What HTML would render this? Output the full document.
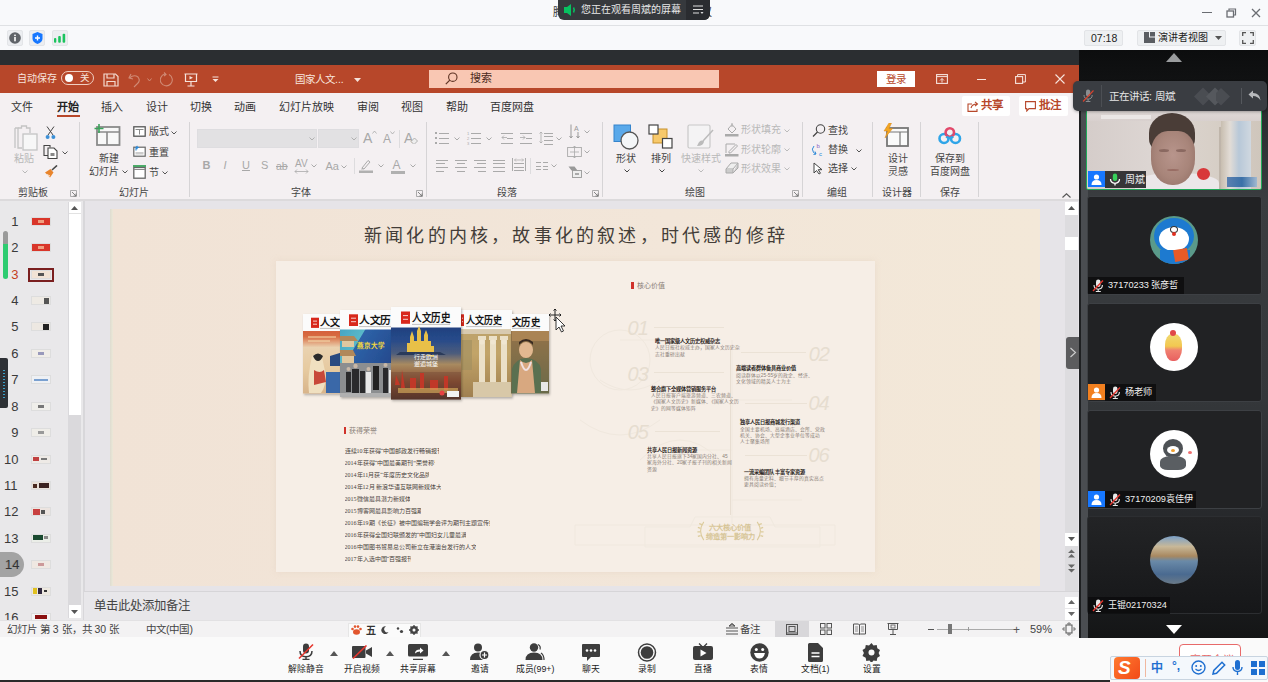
<!DOCTYPE html>
<html lang="zh-CN"><head><meta charset="utf-8">
<style>
*{margin:0;padding:0;box-sizing:border-box}
html,body{width:1268px;height:682px;overflow:hidden;background:#f7f8fa;font-family:"Liberation Sans",sans-serif;color:#333}
.a{position:absolute}
.t{position:absolute;white-space:nowrap;line-height:1}
</style></head><body>
<!-- top title bar -->
<div class="a" style="left:0;top:0;width:1268px;height:26px;background:#f8f9fb;border-bottom:1px solid #dfe1e4"></div>
<div class="a" style="left:0;top:26px;width:1268px;height:24px;background:#f8f9fb"></div>

<!-- title bar content -->
<div class="t" style="left:553px;top:7px;font-size:11px;color:#333">腾</div>
<div class="t" style="left:701px;top:7px;font-size:11px;color:#333">议</div>
<div class="a" style="left:558px;top:-6px;width:152px;height:26px;background:#36393d;border-radius:6px"></div>
<div class="a" style="left:686px;top:0;width:24px;height:20px;background:#2a2c30;border-radius:0 0 6px 0"></div>
<svg class="a" style="left:564px;top:4px" width="14" height="12" viewBox="0 0 14 12"><path d="M0 3h3l4-3v12l-4-3H0z" fill="#07c160"/><path d="M9.5 3.5q1.5 2.5 0 5" stroke="#07c160" stroke-width="1.5" fill="none"/></svg>
<div class="t" style="left:581px;top:5px;font-size:10px;color:#e8e8e8">您正在观看周斌的屏幕</div>
<svg class="a" style="left:693px;top:5px" width="11" height="10" viewBox="0 0 11 10"><path d="M0 1h10M0 4.5h10M0 8h6" stroke="#ddd" stroke-width="1.2"/><path d="M7.5 7h3l-1.5 2z" fill="#ddd"/></svg>
<!-- window controls -->
<div class="a" style="left:1202px;top:12px;width:10px;height:1.3px;background:#6a6d72"></div>
<svg class="a" style="left:1226px;top:8px" width="11" height="10" viewBox="0 0 11 10"><rect x="1" y="3" width="6.5" height="6" fill="none" stroke="#6a6d72" stroke-width="1.3"/><path d="M3 2.5V1h6.5v6h-1.5" fill="none" stroke="#6a6d72" stroke-width="1.2"/></svg>
<svg class="a" style="left:1251px;top:8px" width="10" height="10" viewBox="0 0 10 10"><path d="M1 1l8 8M9 1l-8 8" stroke="#6a6d72" stroke-width="1.3"/></svg>
<!-- second row icons -->
<div class="a" style="left:7px;top:30px;width:16px;height:16px;background:#eceef1;border:1px solid #e3e5e8;border-radius:2px"></div>
<div class="a" style="left:29px;top:30px;width:16px;height:16px;background:#eceef1;border:1px solid #e3e5e8;border-radius:2px"></div>
<div class="a" style="left:52px;top:30px;width:16px;height:16px;background:#eceef1;border:1px solid #e3e5e8;border-radius:2px"></div>
<svg class="a" style="left:9px;top:32px" width="12" height="12" viewBox="0 0 12 12"><circle cx="6" cy="6" r="5.8" fill="#5f6368"/><rect x="5.2" y="5" width="1.6" height="4.3" fill="#fff"/><rect x="5.2" y="2.6" width="1.6" height="1.5" fill="#fff"/></svg>
<svg class="a" style="left:32px;top:32px" width="11" height="12" viewBox="0 0 11 12"><path d="M5.5 0L10.5 2V6.5Q10.5 10 5.5 12Q0.5 10 0.5 6.5V2z" fill="#1677ff"/><path d="M5.5 3.5v5M3 6h5" stroke="#fff" stroke-width="1.4"/></svg>
<svg class="a" style="left:54px;top:33px" width="12" height="10" viewBox="0 0 12 10"><rect x="0" y="5" width="2.3" height="4.7" rx="1" fill="#1bc45e"/><rect x="4.2" y="3" width="2.6" height="6.7" rx="1" fill="#1bc45e"/><rect x="8.6" y="0.8" width="2.6" height="8.9" rx="1" fill="#1bc45e"/></svg>
<!-- time / presenter view / fullscreen -->
<div class="a" style="left:1084px;top:30px;width:39px;height:16px;background:#eef0f2;border:1px solid #e2e4e7;border-radius:2px"></div>
<div class="t" style="left:1091px;top:33px;font-size:10.5px;color:#222">07:18</div>
<div class="a" style="left:1137px;top:30px;width:89px;height:16px;background:#eef0f2;border:1px solid #e2e4e7;border-radius:2px"></div>
<svg class="a" style="left:1144px;top:32px" width="11" height="11" viewBox="0 0 11 11"><path d="M0 0h5v5.5h6V11H0z" fill="#5a5d62"/><rect x="6" y="0" width="5" height="4.5" fill="#5a5d62"/></svg>
<div class="t" style="left:1158px;top:33px;font-size:10px;color:#222">演讲者视图</div>
<svg class="a" style="left:1215px;top:36px" width="7" height="5" viewBox="0 0 7 5"><path d="M0 0h7L3.5 4z" fill="#555"/></svg>
<div class="a" style="left:1239px;top:30px;width:17px;height:16px;background:#eef0f2;border:1px solid #e2e4e7;border-radius:2px"></div>
<svg class="a" style="left:1242px;top:32px" width="12" height="12" viewBox="0 0 12 12"><path d="M0.7 4V0.7H4M8 0.7h3.3V4M11.3 8v3.3H8M4 11.3H0.7V8" fill="none" stroke="#555" stroke-width="1.3"/></svg>
<!-- dark band -->
<div class="a" style="left:0;top:50px;width:1268px;height:15px;background:#2b2e31"></div>
<!-- right panel -->
<div class="a" style="left:1079px;top:50px;width:189px;height:588px;background:#161718"></div>
<!-- PPT window -->
<div id="ppt" class="a" style="left:0;top:65px;width:1079px;height:572px;background:#e6e5e8;overflow:hidden">
  <div class="a" style="left:0;top:0;width:1079px;height:28px;background:#b7472a"></div>
  <div class="a" style="left:0;top:28px;width:1079px;height:107px;background:#f4f0f2"></div>
  <!-- title bar -->
  <div class="t" style="left:17px;top:9px;font-size:10px;color:#f6e3dc">自动保存</div>
  <div class="a" style="left:61px;top:6px;width:33px;height:14px;border:1px solid #f0cfc2;border-radius:7px"></div>
  <div class="a" style="left:65px;top:9px;width:8px;height:8px;background:#fff;border-radius:50%"></div>
  <div class="t" style="left:80px;top:8px;font-size:9.5px;color:#f6e3dc">关</div>
  <svg class="a" style="left:103px;top:8px" width="16" height="14" viewBox="0 0 16 14"><path d="M1 1h11.5l2.5 2.5V13H1z" fill="none" stroke="#f3d9cf" stroke-width="1.2"/><path d="M4 1v4h7V1M4 13V8.5h8V13" fill="none" stroke="#f3d9cf" stroke-width="1.2"/></svg>
  <svg class="a" style="left:128px;top:8px" width="14" height="15" viewBox="0 0 14 15"><path d="M3 1L1 5l4 1" fill="none" stroke="#d08b76" stroke-width="1.1"/><path d="M1.5 5Q6 1 10 4Q13 8 9 11L6 14" fill="none" stroke="#d08b76" stroke-width="1.1"/></svg>
  <svg class="a" style="left:147px;top:13px" width="5" height="4" viewBox="0 0 5 4"><path d="M0.5 0.5L2.5 3 4.5 0.5" fill="none" stroke="#d08b76"/></svg>
  <svg class="a" style="left:160px;top:7px" width="14" height="15" viewBox="0 0 14 15"><path d="M9 2.5A6 6 0 1 1 5 2" fill="none" stroke="#d08b76" stroke-width="1.1"/><path d="M4 0.5l2 2-2 1.5" fill="none" stroke="#d08b76" stroke-width="1.1"/></svg>
  <svg class="a" style="left:184px;top:8px" width="14" height="14" viewBox="0 0 14 14"><path d="M0.5 1h13M1.5 1v7.5h11V1M7 8.5v4.5M3.5 13h7" fill="none" stroke="#f6e3dc" stroke-width="1.2"/><path d="M5.5 3l3.5 1.8-3.5 1.8z" fill="#f6e3dc"/></svg>
  <svg class="a" style="left:212px;top:11px" width="7" height="7" viewBox="0 0 7 7"><path d="M0.5 1h6" stroke="#f6e3dc"/><path d="M0.5 3h6L3.5 6z" fill="#f6e3dc"/></svg>
  <div class="t" style="left:295px;top:8.5px;font-size:10.5px;color:#f8e6df">国家人文...</div>
  <svg class="a" style="left:354px;top:13px" width="7" height="5" viewBox="0 0 7 5"><path d="M0 0h7L3.5 4z" fill="#f6e3dc"/></svg>
  <div class="a" style="left:429px;top:5px;width:290px;height:18px;background:#f9c7b3"></div>
  <svg class="a" style="left:445px;top:7px" width="13" height="13" viewBox="0 0 13 13"><circle cx="7.8" cy="5.2" r="4.2" fill="none" stroke="#5e3324" stroke-width="1.1"/><path d="M4.8 8.2L0.8 12.2" stroke="#5e3324" stroke-width="1.2"/></svg>
  <div class="t" style="left:470px;top:8px;font-size:11px;color:#4a2a20">搜索</div>
  <div class="a" style="left:877px;top:6px;width:38px;height:16px;background:#fff"></div>
  <div class="t" style="left:886px;top:9px;font-size:10.5px;color:#b7472a">登录</div>
  <svg class="a" style="left:936px;top:9px" width="12" height="10" viewBox="0 0 12 10"><rect x="0.6" y="0.6" width="10.8" height="8.8" fill="none" stroke="#f6e3dc" stroke-width="1.1"/><path d="M0.6 2.6h10.8M6 8.5V4.5M4 6.5l2-2 2 2" fill="none" stroke="#f6e3dc" stroke-width="1"/></svg>
  <div class="a" style="left:977px;top:14px;width:9px;height:1px;background:#f6e3dc"></div>
  <svg class="a" style="left:1015px;top:9px" width="11" height="10" viewBox="0 0 11 10"><rect x="0.6" y="2.6" width="7" height="6.8" fill="none" stroke="#f6e3dc" stroke-width="1.1"/><path d="M2.6 2.6V0.6h7.8v7.4H7.6" fill="none" stroke="#f6e3dc" stroke-width="1"/></svg>
  <svg class="a" style="left:1055px;top:9px" width="10" height="10" viewBox="0 0 10 10"><path d="M0.5 0.5l9 9M9.5 0.5l-9 9" stroke="#f6e3dc" stroke-width="1.1"/></svg>
  <!-- tabs -->
  <div class="t" style="left:11px;top:36.8px;font-size:11px;color:#333">文件</div>
  <div class="t" style="left:57px;top:36.8px;font-size:11px;color:#222;font-weight:bold">开始</div>
  <div class="a" style="left:57px;top:50px;width:23px;height:2px;background:#b7472a"></div>
  <div class="t" style="left:101px;top:36.8px;font-size:11px;color:#333">插入</div>
  <div class="t" style="left:146px;top:36.8px;font-size:11px;color:#333">设计</div>
  <div class="t" style="left:190px;top:36.8px;font-size:11px;color:#333">切换</div>
  <div class="t" style="left:234px;top:36.8px;font-size:11px;color:#333">动画</div>
  <div class="t" style="left:279px;top:36.8px;font-size:11px;color:#333">幻灯片放映</div>
  <div class="t" style="left:357px;top:36.8px;font-size:11px;color:#333">审阅</div>
  <div class="t" style="left:401px;top:36.8px;font-size:11px;color:#333">视图</div>
  <div class="t" style="left:446px;top:36.8px;font-size:11px;color:#333">帮助</div>
  <div class="t" style="left:490px;top:36.8px;font-size:11px;color:#333">百度网盘</div>
  <div class="a" style="left:962px;top:31px;width:48px;height:20px;background:#fff;border-radius:2px"></div>
  <svg class="a" style="left:967px;top:36px" width="12" height="11" viewBox="0 0 12 11"><path d="M5 3H1v7.4h9V8" fill="none" stroke="#b7472a" stroke-width="1.1"/><path d="M4 7Q5 3 10 3M8 0.8L10.5 3 8 5.2" fill="none" stroke="#b7472a" stroke-width="1.1"/></svg>
  <div class="t" style="left:981px;top:35px;font-size:11.5px;color:#b7472a;font-weight:bold">共享</div>
  <div class="a" style="left:1019px;top:31px;width:49px;height:20px;background:#fff;border-radius:2px"></div>
  <svg class="a" style="left:1025px;top:36px" width="11" height="11" viewBox="0 0 11 11"><path d="M0.6 0.6h9.8v7H4L1.8 10V7.6H0.6z" fill="none" stroke="#b7472a" stroke-width="1.1"/></svg>
  <div class="t" style="left:1039px;top:35px;font-size:11.5px;color:#b7472a;font-weight:bold">批注</div>

  <div class="a" style="left:0;top:555px;width:1079px;height:17px;background:#f3f2f2"></div>
</div>
<!-- WORK -->
<div class="a" style="left:0;top:200px;width:84px;height:420px;background:#e9e8ea"></div>
<div class="a" style="left:84px;top:200px;width:995px;height:420px;background:#e6e4e8"></div>
<div class="a" style="left:83px;top:200px;width:2px;height:420px;background:#d8d7da"></div>
<div class="a" style="left:0;top:199px;width:1079px;height:2px;background:#dcdadc"></div>
<div class="a" style="left:68px;top:202px;width:13px;height:416px;background:#dad9dc"></div>
<div class="a" style="left:68.5px;top:202px;width:12px;height:213px;background:#fff"></div>
<div class="a" style="left:68.5px;top:213px;width:12px;height:1px;background:#e2e2e2"></div>
<svg class="a" style="left:71px;top:206px" width="7" height="4" viewBox="0 0 7 4"><path d="M0 4h7L3.5 0z" fill="#555"/></svg>
<div class="a" style="left:68.5px;top:605px;width:12px;height:13px;background:#fff"></div>
<svg class="a" style="left:71px;top:610px" width="7" height="4" viewBox="0 0 7 4"><path d="M0 0h7L3.5 4z" fill="#555"/></svg>
<div class="t" style="left:11.3px;top:214.7px;font-size:13px;color:#3a3a3a;">1</div>
<div class="a" style="left:31px;top:216.7px;width:20px;height:9px;background:#d9362a;border:0.5px solid #ddd"></div>
<div class="a" style="left:38px;top:219.7px;width:6px;height:3px;background:#f0a080"></div>
<div class="t" style="left:11.3px;top:241.1px;font-size:13px;color:#3a3a3a;">2</div>
<div class="a" style="left:31px;top:243.1px;width:20px;height:9px;background:#d9362a;border:0.5px solid #ddd"></div>
<div class="a" style="left:38px;top:246.1px;width:6px;height:3px;background:#f0a080"></div>
<div class="t" style="left:11.3px;top:267.6px;font-size:13px;color:#c4401e;">3</div>
<div class="a" style="left:28px;top:267.6px;width:26px;height:14px;border:2px solid #7a1f1f"></div>
<div class="a" style="left:31px;top:269.6px;width:20px;height:9px;background:#f1e3d5;border:0.5px solid #ddd"></div>
<div class="a" style="left:38px;top:272.6px;width:6px;height:3px;background:#555"></div>
<div class="t" style="left:11.3px;top:294.0px;font-size:13px;color:#3a3a3a;">4</div>
<div class="a" style="left:31px;top:296.0px;width:20px;height:9px;background:#eeeae4;border:0.5px solid #ddd"></div>
<div class="a" style="left:44px;top:297.5px;width:5px;height:6px;background:#555"></div>
<div class="t" style="left:11.3px;top:320.4px;font-size:13px;color:#3a3a3a;">5</div>
<div class="a" style="left:31px;top:322.4px;width:20px;height:9px;background:#ede8e2;border:0.5px solid #ddd"></div>
<div class="a" style="left:43px;top:323.9px;width:6px;height:6px;background:#222"></div>
<div class="t" style="left:11.3px;top:346.9px;font-size:13px;color:#3a3a3a;">6</div>
<div class="a" style="left:31px;top:348.9px;width:20px;height:9px;background:#f0ede8;border:0.5px solid #ddd"></div>
<div class="a" style="left:38px;top:351.9px;width:6px;height:3px;background:#99b"></div>
<div class="t" style="left:11.3px;top:373.3px;font-size:13px;color:#3a3a3a;">7</div>
<div class="a" style="left:31px;top:375.3px;width:20px;height:9px;background:#eef0f4;border:0.5px solid #ddd"></div>
<div class="a" style="left:34px;top:378.8px;width:14px;height:2px;background:#7aa0d0"></div>
<div class="t" style="left:11.3px;top:399.7px;font-size:13px;color:#3a3a3a;">8</div>
<div class="a" style="left:31px;top:401.7px;width:20px;height:9px;background:#efeeea;border:0.5px solid #ddd"></div>
<div class="a" style="left:38px;top:404.7px;width:6px;height:3px;background:#777"></div>
<div class="t" style="left:11.3px;top:426.1px;font-size:13px;color:#3a3a3a;">9</div>
<div class="a" style="left:31px;top:428.1px;width:20px;height:9px;background:#efede8;border:0.5px solid #ddd"></div>
<div class="a" style="left:38px;top:431.1px;width:6px;height:3px;background:#999"></div>
<div class="t" style="left:4.1px;top:452.6px;font-size:13px;color:#3a3a3a;">10</div>
<div class="a" style="left:31px;top:454.6px;width:20px;height:9px;background:#eeeae6;border:0.5px solid #ddd"></div>
<div class="a" style="left:33px;top:457.1px;width:6px;height:4px;background:#c04040"></div>
<div class="a" style="left:41px;top:458.1px;width:6px;height:2px;background:#777"></div>
<div class="t" style="left:4.1px;top:479.0px;font-size:13px;color:#3a3a3a;">11</div>
<div class="a" style="left:31px;top:481.0px;width:20px;height:9px;background:#e8e0d8;border:0.5px solid #ddd"></div>
<div class="a" style="left:33px;top:483.5px;width:4px;height:4px;background:#4a2a20"></div>
<div class="a" style="left:39px;top:482.5px;width:10px;height:5px;background:#3a2220"></div>
<div class="t" style="left:4.1px;top:505.4px;font-size:13px;color:#3a3a3a;">12</div>
<div class="a" style="left:31px;top:507.4px;width:20px;height:9px;background:#ece4e0;border:0.5px solid #ddd"></div>
<div class="a" style="left:33px;top:508.9px;width:7px;height:6px;background:#c84040"></div>
<div class="a" style="left:41px;top:509.9px;width:4px;height:4px;background:#555"></div>
<div class="t" style="left:4.1px;top:531.9px;font-size:13px;color:#3a3a3a;">13</div>
<div class="a" style="left:31px;top:533.9px;width:20px;height:9px;background:#ebeee8;border:0.5px solid #ddd"></div>
<div class="a" style="left:33px;top:535.4px;width:10px;height:5px;background:#1a4a30"></div>
<div class="a" style="left:44px;top:536.4px;width:4px;height:3px;background:#888"></div>
<div class="t" style="left:4.1px;top:558.3px;font-size:13px;color:#3a3a3a;">14</div>
<div class="a" style="left:31px;top:560.3px;width:20px;height:9px;background:#efe8e2;border:0.5px solid #ddd"></div>
<div class="a" style="left:38px;top:563.3px;width:6px;height:3px;background:#c99"></div>
<div class="t" style="left:4.1px;top:584.7px;font-size:13px;color:#3a3a3a;">15</div>
<div class="a" style="left:31px;top:586.7px;width:20px;height:9px;background:#ede8e0;border:0.5px solid #ddd"></div>
<div class="a" style="left:33px;top:588.2px;width:4px;height:6px;background:#e0c020"></div>
<div class="a" style="left:38px;top:588.2px;width:4px;height:6px;background:#332a40"></div>
<div class="a" style="left:44px;top:590.2px;width:3px;height:2px;background:#333"></div>
<div class="t" style="left:4.1px;top:611.1px;font-size:13px;color:#3a3a3a;">16</div>
<div class="a" style="left:31px;top:613.1px;width:20px;height:9px;background:#f4f4f4;border:0.5px solid #ddd"></div>
<div class="a" style="left:35px;top:614.6px;width:12px;height:4px;background:#8a1010"></div>
<div class="a" style="left:3px;top:231px;width:5px;height:48px;border-radius:3px;background:linear-gradient(#9a9a9a 0,#9a9a9a 26%,#2ecc71 27%,#2ecc71 100%)"></div>
<div class="a" style="left:0;top:358px;width:8px;height:50px;background:#2e3136;border-radius:0 2px 2px 0"></div>
<div class="a" style="left:3px;top:370px;width:2px;height:30px;background:repeating-linear-gradient(#3aa0c8 0 1px,transparent 1px 3px)"></div>
<div class="a" style="left:-12px;top:552px;width:36px;height:25px;border-radius:13px;background:#9b9b9b;opacity:.9"></div>
<div class="t" style="left:5px;top:558.0px;font-size:13px;color:#333;">14</div>
<div class="a" style="left:1065px;top:202px;width:13px;height:390px;background:#dddcdf"></div>
<div class="a" style="left:1065px;top:202px;width:13px;height:13px;background:#fff"></div>
<svg class="a" style="left:1068px;top:206px" width="7" height="4" viewBox="0 0 7 4"><path d="M0 4h7L3.5 0z" fill="#555"/></svg>
<div class="a" style="left:1065px;top:237px;width:13px;height:13px;background:#fff"></div>
<div class="a" style="left:1065px;top:533px;width:13px;height:13px;background:#fff"></div>
<svg class="a" style="left:1068px;top:537px" width="7" height="4" viewBox="0 0 7 4"><path d="M0 0h7L3.5 4z" fill="#555"/></svg>
<svg class="a" style="left:1067px;top:549px" width="9" height="9" viewBox="0 0 9 9"><path d="M1 4h7L4.5 0.5zM1 8.5h7L4.5 5z" fill="#666"/></svg>
<svg class="a" style="left:1067px;top:564px" width="9" height="9" viewBox="0 0 9 9"><path d="M1 0.5h7L4.5 4zM1 5h7L4.5 8.5z" fill="#666"/></svg>
<div class="a" style="left:84px;top:591px;width:995px;height:1px;background:#d6d5d8"></div>
<div class="a" style="left:84px;top:592px;width:995px;height:28px;background:#e8e7ea"></div>
<div class="t" style="left:94px;top:599.8px;font-size:12.4px;color:#444;">单击此处添加备注</div>
<div class="a" style="left:1065px;top:597px;width:13px;height:11px;background:#fff"></div>
<svg class="a" style="left:1068px;top:600px" width="7" height="4" viewBox="0 0 7 4"><path d="M0 4h7L3.5 0z" fill="#666"/></svg>
<div class="a" style="left:1065px;top:609px;width:13px;height:11px;background:#fff"></div>
<svg class="a" style="left:1068px;top:612px" width="7" height="4" viewBox="0 0 7 4"><path d="M0 0h7L3.5 4z" fill="#666"/></svg>
<div class="a" style="left:0;top:620px;width:1079px;height:17px;background:#f3f2f3;border-top:1px solid #e2e1e3"></div>
<div class="t" style="left:7px;top:624.2px;font-size:10.5px;color:#444;">幻灯片 第 3 张，共 30 张</div>
<div class="t" style="left:146px;top:624.2px;font-size:10.5px;color:#444;">中文(中国)</div>
<div class="a" style="left:348px;top:623px;width:73px;height:14px;background:#fbfbfb;border:1px solid #e6e6e6;border-bottom:none"></div>
<svg class="a" style="left:351px;top:625px" width="11" height="10" viewBox="0 0 11 10"><ellipse cx="5.5" cy="7" rx="3.5" ry="2.8" fill="#e2562e"/><circle cx="1.5" cy="4" r="1.3" fill="#e2562e"/><circle cx="4" cy="1.6" r="1.3" fill="#e2562e"/><circle cx="7" cy="1.6" r="1.3" fill="#e2562e"/><circle cx="9.5" cy="4" r="1.3" fill="#e2562e"/></svg>
<div class="t" style="left:366px;top:625.5px;font-size:10px;color:#333;font-weight:bold">五</div>
<svg class="a" style="left:381px;top:626px" width="8" height="8" viewBox="0 0 8 8"><path d="M5 0.5A3.8 3.8 0 1 0 7.5 6 3 3 0 0 1 5 0.5z" fill="#444"/></svg>
<svg class="a" style="left:396px;top:626px" width="8" height="8" viewBox="0 0 8 8"><circle cx="2" cy="2.5" r="1.2" fill="#444"/><circle cx="5.5" cy="5.5" r="1.6" fill="#444"/></svg>
<svg class="a" style="left:409px;top:625px" width="10" height="10" viewBox="0 0 10 10"><circle cx="5" cy="5" r="3" fill="none" stroke="#444" stroke-width="2"/><path d="M5 0v10M0 5h10M1.5 1.5l7 7M8.5 1.5l-7 7" stroke="#444" stroke-width="1.3"/><circle cx="5" cy="5" r="1.5" fill="#fbfbfb"/></svg>
<svg class="a" style="left:726px;top:623px" width="12" height="12" viewBox="0 0 12 12"><path d="M6 0.5L3 3h6zM0 5h12M0 8h12M0 11h12" fill="none" stroke="#555" stroke-width="1"/><path d="M3.5 3L6 0.8 8.5 3" fill="none" stroke="#555"/></svg>
<div class="t" style="left:740px;top:624.2px;font-size:10.5px;color:#444;">备注</div>
<div class="a" style="left:775px;top:621px;width:34px;height:16px;background:#d8d7da"></div>
<svg class="a" style="left:786px;top:624px" width="12" height="11" viewBox="0 0 12 11"><rect x="0.5" y="0.5" width="11" height="10" fill="none" stroke="#555"/><rect x="3" y="2.5" width="6" height="5" fill="none" stroke="#555"/><path d="M0.5 9h11" stroke="#555"/></svg>
<svg class="a" style="left:820px;top:623px" width="12" height="12" viewBox="0 0 12 12"><rect x="0.5" y="0.5" width="4.5" height="4.5" fill="none" stroke="#555"/><rect x="7" y="0.5" width="4.5" height="4.5" fill="none" stroke="#555"/><rect x="0.5" y="7" width="4.5" height="4.5" fill="none" stroke="#555"/><rect x="7" y="7" width="4.5" height="4.5" fill="none" stroke="#555"/></svg>
<svg class="a" style="left:853px;top:623px" width="13" height="12" viewBox="0 0 13 12"><path d="M0.5 1h5l1 1 1-1h5v10h-5l-1 0.8-1-0.8h-5z M6.5 2v9.5" fill="none" stroke="#555"/><path d="M2 4h3M2 6h3M2 8h3M8 4h3M8 6h3M8 8h3" stroke="#777" stroke-width="0.8"/></svg>
<svg class="a" style="left:887px;top:623px" width="12" height="12" viewBox="0 0 12 12"><path d="M0.5 0.5h11M1.5 0.5v6h9v-6M6 6.5V11M3 11.5h6" fill="none" stroke="#555"/><rect x="4" y="2" width="4" height="3" fill="none" stroke="#555" stroke-width="0.8"/></svg>
<div class="a" style="left:928px;top:629px;width:6px;height:1px;background:#555"></div>
<div class="a" style="left:937px;top:629px;width:80px;height:1px;background:#aaa"></div>
<div class="a" style="left:948px;top:624px;width:4px;height:10px;background:#777"></div>
<div class="a" style="left:968px;top:627px;width:1px;height:4px;background:#999"></div>
<div class="t" style="left:1013px;top:623.5px;font-size:12px;color:#555;">+</div>
<div class="t" style="left:1030px;top:624.0px;font-size:11px;color:#444;">59%</div>
<svg class="a" style="left:1062px;top:622px" width="14" height="14" viewBox="0 0 14 14"><rect x="4" y="3" width="6" height="8" fill="none" stroke="#555"/><path d="M7 0.5L5.5 2h3zM7 13.5L5.5 12h3zM0.5 7L2 5.5v3zM13.5 7L12 5.5v3z" fill="none" stroke="#555" stroke-width="0.8"/></svg>
<!-- /WORK -->
<!-- CONTENT -->
<div class="a" style="left:110px;top:209px;width:930px;height:377px;background:linear-gradient(90deg,#f1e3d6 0%,#f2e6d9 60%,#f3e8d8 100%)"></div>
<div class="a" style="left:110px;top:209px;width:3px;height:377px;background:linear-gradient(90deg,#dedcd0,#ece8d8)"></div>
<div class="t" style="left:364px;top:227px;font-size:18px;letter-spacing:3.2px;color:#433d38;font-family:'Liberation Serif',serif">新闻化的内核，故事化的叙述，时代感的修辞</div>
<div class="a" style="left:276px;top:261px;width:599px;height:311px;background:#f6eee6;box-shadow:0 0 6px rgba(220,200,180,.35)"></div>
<svg class="a" style="left:560px;top:300px" width="300" height="270" viewBox="0 0 300 270"><g fill="none" stroke="#f0e8de" stroke-width="1"><path d="M172 40V225M150 225h-135v20h260v-20H185"/><path d="M172 100h60M172 150h-80M172 200h70M60 40h100M40 80q30 20 60 0M20 120q40 30 80 0"/><circle cx="60" cy="60" r="30"/><path d="M80 160q40-40 80 0"/></g></svg>
<svg class="a" style="left:300px;top:304px" width="256" height="100" viewBox="300 304 256 100"><defs><filter id="sh" x="-10%" y="-10%" width="130%" height="130%"><feDropShadow dx="1" dy="1.5" stdDeviation="1.2" flood-color="#000" flood-opacity=".28"/></filter><linearGradient id="c1" x1="0" y1="0" x2="0" y2="1"><stop offset="0" stop-color="#c9432c"/><stop offset=".28" stop-color="#d86a40"/><stop offset=".42" stop-color="#ead2b0"/><stop offset=".7" stop-color="#e6caa0"/><stop offset="1" stop-color="#d8b48a"/></linearGradient><linearGradient id="c2" x1="0" y1="0" x2="1" y2="1"><stop offset="0" stop-color="#3c9cc0"/><stop offset=".35" stop-color="#5ab8c8"/><stop offset=".36" stop-color="#2e62a8"/><stop offset="1" stop-color="#203e80"/></linearGradient><linearGradient id="c3" x1="0" y1="0" x2="0" y2="1"><stop offset="0" stop-color="#16306a"/><stop offset=".35" stop-color="#264a8a"/><stop offset=".5" stop-color="#4c5c7c"/><stop offset=".62" stop-color="#a88a60"/><stop offset=".8" stop-color="#8a5034"/><stop offset="1" stop-color="#4a3028"/></linearGradient><linearGradient id="c4" x1="0" y1="0" x2="0" y2="1"><stop offset="0" stop-color="#b8a070"/><stop offset=".5" stop-color="#c2a468"/><stop offset="1" stop-color="#a08050"/></linearGradient><linearGradient id="c5" x1="0" y1="0" x2="0" y2="1"><stop offset="0" stop-color="#a07848"/><stop offset=".4" stop-color="#8a7048"/><stop offset="1" stop-color="#6a6a48"/></linearGradient></defs><g filter="url(#sh)"><rect x="303" y="314" width="40" height="79.5" fill="url(#c1)"/></g><rect x="303" y="314" width="40" height="17" fill="#fbfbfb"/><rect x="311" y="317.7" width="8" height="10.2" fill="#d8281c"/><path d="M313 321.1h4M313 324.2h4" stroke="#fff" stroke-width="0.8"/><text x="320" y="326.2" font-size="10" font-weight="bold" fill="#151515" font-family="Liberation Serif,serif" textLength="20" lengthAdjust="spacingAndGlyphs">人文</text><path d="M320 328.4h20" stroke="#888" stroke-width="0.5"/><path d="M308 337h28M308 341h22" stroke="#f6e0b0" stroke-width="1.2"/><path d="M330 356l13-4v14h-13z" fill="#2a4a80"/><path d="M326 372h17v21h-17z" fill="#3a68a8"/><path d="M312 356q6-4 10 1l3 14q2 14-4 22h-12q-2-16 3-37z" fill="#f0e0c0"/><path d="M314 370q6 4 10 0l2 12-12 3z" fill="#c84838"/><path d="M313 356q5-5 10 0q-2 5-5 5q-3 0-5-5z" fill="#2a2a2a"/><g filter="url(#sh)"><rect x="340" y="310" width="52" height="87" fill="url(#c2)"/></g><rect x="340" y="310" width="52" height="19.5" fill="#fbfbfb"/><rect x="349" y="314.3" width="9" height="11.7" fill="#d8281c"/><path d="M351 318.2h5M351 321.7h5" stroke="#fff" stroke-width="0.8"/><text x="359" y="324.0" font-size="10" font-weight="bold" fill="#151515" font-family="Liberation Serif,serif" textLength="32" lengthAdjust="spacingAndGlyphs">人文历</text><path d="M359 326.6h32" stroke="#888" stroke-width="0.5"/><path d="M340 336h14l4 5h-18zM340 350h13l3 6h-16z" fill="#b0885a"/><path d="M342 341h12v6h-12zM342 356h12v7h-12z" fill="#e0c8a0"/><text x="357" y="348" font-size="6.5" font-weight="bold" fill="#f4d840">燕京大学</text><rect x="340" y="363" width="52" height="34" fill="#8c8e90"/><path d="M346 372h5v20h-5zM352 369h7v25h-7zM360 371h5v23h-5zM383 368h5v25h-5z" fill="#2a2a2c"/><path d="M366 372h5v22h-5zM389 370h3v23h-3z" fill="#e8e8e8"/><path d="M373 366h6v24h-6z" fill="#222"/><circle cx="348.5" cy="369" r="2" fill="#c8b8a8"/><circle cx="355.5" cy="366" r="2.2" fill="#c8b8a8"/><circle cx="368.5" cy="369" r="2" fill="#c8b8a8"/><circle cx="385.5" cy="365" r="2" fill="#c8b8a8"/><rect x="340" y="393" width="52" height="4" fill="#b0b0b0"/><g filter="url(#sh)"><rect x="461" y="310" width="51" height="87" fill="url(#c4)"/></g><rect x="461" y="310" width="51" height="19.5" fill="#fbfbfb"/><rect x="461" y="314.3" width="3" height="11.7" fill="#d8281c"/><path d="M463 318.2h-1M463 321.7h-1" stroke="#fff" stroke-width="0.8"/><text x="466" y="324.0" font-size="10" font-weight="bold" fill="#151515" font-family="Liberation Serif,serif" textLength="36" lengthAdjust="spacingAndGlyphs">人文历史</text><path d="M466 326.6h36" stroke="#888" stroke-width="0.5"/><path d="M462 340h10v30h-10z" fill="#a09060" opacity=".6"/><path d="M461 330h51v4h-51z" fill="#d8cab0"/><path d="M478 336h8v4h-1v42h-6v-42h-1z" fill="#ebe0c8"/><circle cx="482" cy="342" r="2.6" fill="#f0e6d2"/><path d="M489 336h8v4h-1v42h-6v-42h-1z" fill="#ebe0c8"/><circle cx="493" cy="342" r="2.6" fill="#f0e6d2"/><path d="M500 336h8v4h-1v42h-6v-42h-1z" fill="#ebe0c8"/><circle cx="504" cy="342" r="2.6" fill="#f0e6d2"/><rect x="473" y="382" width="39" height="15" fill="#d8c8a8"/><g filter="url(#sh)"><rect x="511" y="314" width="38" height="79.5" fill="url(#c5)"/></g><rect x="511" y="314" width="38" height="17" fill="#fbfbfb"/><text x="512" y="326.2" font-size="10" font-weight="bold" fill="#151515" font-family="Liberation Serif,serif" textLength="28" lengthAdjust="spacingAndGlyphs">文历史</text><path d="M512 328.4h28" stroke="#888" stroke-width="0.5"/><path d="M512 331h37v10h-37z" fill="#b08858" opacity=".8"/><ellipse cx="526" cy="350" rx="7" ry="8" fill="#e2b890"/><path d="M519 345q7-8 14 0v-3q-7-6-14 0z" fill="#3a2a20"/><path d="M512 393v-24q3-10 14-11q13 1 15 11v24z" fill="#5a7050"/><path d="M520 360q6 6 12 0l3 33h-18z" fill="#d8a880"/><path d="M521 362q5 16 10 0" fill="none" stroke="#f0e0e0" stroke-width="2"/><rect x="541" y="382" width="7" height="9" fill="#e8e8e8"/><g filter="url(#sh)"><rect x="391" y="307" width="70" height="92.5" fill="url(#c3)"/></g><rect x="391" y="307" width="70" height="20.5" fill="#fbfbfb"/><rect x="401" y="311.5" width="9" height="12.3" fill="#d8281c"/><path d="M403 315.6h5M403 319.3h5" stroke="#fff" stroke-width="0.8"/><text x="412" y="321.8" font-size="11" font-weight="bold" fill="#151515" font-family="Liberation Serif,serif" textLength="38" lengthAdjust="spacingAndGlyphs">人文历史</text><path d="M412 324.4h38" stroke="#888" stroke-width="0.5"/><path d="M407 352v-9h3v-6l2-6 2 6v4h3v-10l2-5 2 5v10h3v-6l2-5 2 5v6h3v5h3v11z" fill="#e8c048"/><path d="M400 352h40l6 3h-50z" fill="#2a3a5a"/><text x="414" y="359" font-size="6" fill="#fff">行走欧洲</text><text x="414" y="366" font-size="6" fill="#fff">邂逅城堡</text><path d="M391 372h70v27.5h-70z" fill="#6a4030" opacity=".35"/><path d="M396 375l4 10h-5zM402 370l3 18h-4zM410 378h6v12h-6zM420 373h4v16h-4zM430 380h8v10h-8zM444 376h4v14h-4z" fill="#c03828"/><path d="M398 388h60v5h-60z" fill="#e0b860" opacity=".6"/><rect x="447" y="391" width="12" height="6" fill="#f2f2f2"/><circle cx="442" cy="393" r="2.5" fill="#e84040"/></svg>
<svg class="a" style="left:549px;top:309px;z-index:5" width="18" height="24" viewBox="0 0 18 24"><path d="M6 0v12M0 6h12M6 0L4.5 1.5M6 0l1.5 1.5M0 6l1.5-1.5M0 6l1.5 1.5M12 6l-1.5-1.5M12 6l-1.5 1.5M6 12l-1.5-1.5M6 12l1.5-1.5" stroke="#222" stroke-width="1"/><path d="M7 8v13l3-3 2.5 5 2-1-2.5-5H16z" fill="#fff" stroke="#222" stroke-width="0.9"/></svg>
<div class="a" style="left:344px;top:427px;width:2px;height:7px;background:#d0322a"></div>
<div class="t" style="left:349px;top:427.2px;font-size:7px;color:#8a8078;">获得荣誉</div>
<div class="t" style="left:344.5px;top:447.6px;font-size:6px;color:#4a4440;font-family:'Liberation Serif',serif;width:94px;overflow:hidden">连续10年获得“中国邮政发行畅销报刊”</div>
<div class="t" style="left:344.5px;top:459.7px;font-size:6px;color:#4a4440;font-family:'Liberation Serif',serif;width:90px;overflow:hidden">2014年获得“中国最美期刊”荣誉称号</div>
<div class="t" style="left:344.5px;top:471.7px;font-size:6px;color:#4a4440;font-family:'Liberation Serif',serif;width:84px;overflow:hidden">2014年11月获“年度历史文化品牌”</div>
<div class="t" style="left:344.5px;top:483.8px;font-size:6px;color:#4a4440;font-family:'Liberation Serif',serif;width:96px;overflow:hidden">2014年12月 新浪华语互联网新媒体大奖</div>
<div class="t" style="left:344.5px;top:495.8px;font-size:6px;color:#4a4440;font-family:'Liberation Serif',serif;width:65px;overflow:hidden">2015微信最具潜力新媒体奖</div>
<div class="t" style="left:344.5px;top:507.9px;font-size:6px;color:#4a4440;font-family:'Liberation Serif',serif;width:76px;overflow:hidden">2015博客网最具影响力百强期刊</div>
<div class="t" style="left:344.5px;top:519.9px;font-size:6px;color:#4a4440;font-family:'Liberation Serif',serif;width:145px;overflow:hidden">2016年19期《长征》被中国编辑学会评为期刊主题宣传好文章</div>
<div class="t" style="left:344.5px;top:532.0px;font-size:6px;color:#4a4440;font-family:'Liberation Serif',serif;width:121px;overflow:hidden">2016年获得全国妇联颁发的“中国妇女儿童最满意奖”</div>
<div class="t" style="left:344.5px;top:544.0px;font-size:6px;color:#4a4440;font-family:'Liberation Serif',serif;width:131px;overflow:hidden">2016中国图书贸易总公司新立在港澳台发行的人文期刊</div>
<div class="t" style="left:344.5px;top:556.1px;font-size:6px;color:#4a4440;font-family:'Liberation Serif',serif;width:66px;overflow:hidden">2017年入选中国“百强报刊”</div>
<div class="a" style="left:631px;top:282px;width:2.5px;height:7px;background:#d0322a"></div>
<div class="t" style="left:636.5px;top:282.0px;font-size:7px;color:#8a8078;">核心价值</div>
<div class="a" style="left:730px;top:345px;width:1px;height:170px;background:#e8ded2"></div>
<div class="a" style="left:654px;top:327px;width:70px;height:1px;background:#ebe2d6"></div>
<div class="a" style="left:654px;top:372px;width:70px;height:1px;background:#ebe2d6"></div>
<div class="a" style="left:741px;top:352px;width:65px;height:1px;background:#ebe2d6"></div>
<div class="a" style="left:745px;top:403px;width:62px;height:1px;background:#ebe2d6"></div>
<div class="a" style="left:655px;top:431px;width:65px;height:1px;background:#ebe2d6"></div>
<div class="a" style="left:745px;top:455px;width:62px;height:1px;background:#ebe2d6"></div>
<div class="t" style="left:627.6px;top:318.0px;font-size:20px;font-style:italic;color:#e6ddd0;font-family:'Liberation Sans',sans-serif;letter-spacing:-1px">01</div>
<div class="t" style="left:808.7px;top:343.5px;font-size:20px;font-style:italic;color:#e6ddd0;font-family:'Liberation Sans',sans-serif;letter-spacing:-1px">02</div>
<div class="t" style="left:627.6px;top:363.5px;font-size:20px;font-style:italic;color:#e6ddd0;font-family:'Liberation Sans',sans-serif;letter-spacing:-1px">03</div>
<div class="t" style="left:808.5px;top:393.0px;font-size:20px;font-style:italic;color:#e6ddd0;font-family:'Liberation Sans',sans-serif;letter-spacing:-1px">04</div>
<div class="t" style="left:627.7px;top:421.5px;font-size:20px;font-style:italic;color:#e6ddd0;font-family:'Liberation Sans',sans-serif;letter-spacing:-1px">05</div>
<div class="t" style="left:808.4px;top:445.0px;font-size:20px;font-style:italic;color:#e6ddd0;font-family:'Liberation Sans',sans-serif;letter-spacing:-1px">06</div>
<div class="t" style="left:655.2px;top:338.8px;font-size:5.2px;font-weight:bold;color:#2a2522">唯一国家级人文历史权威杂志</div>
<div class="t" style="left:655.2px;top:346.3px;font-size:4.8px;color:#8a8078">人民日报社权威主办，国家人文历史杂</div>
<div class="t" style="left:655.2px;top:352.5px;font-size:4.8px;color:#8a8078">志社重磅出献</div>
<div class="t" style="left:735.8px;top:366.4px;font-size:5.2px;font-weight:bold;color:#2a2522">高端读者群体备具商业价值</div>
<div class="t" style="left:735.8px;top:373.9px;font-size:4.8px;color:#8a8078">阅读群体以25-55岁的政企、经济、</div>
<div class="t" style="left:735.8px;top:380.1px;font-size:4.8px;color:#8a8078">文化领域的精英人士为主</div>
<div class="t" style="left:651.2px;top:386.7px;font-size:5.2px;font-weight:bold;color:#2a2522">整合旗下全媒体营销服务平台</div>
<div class="t" style="left:651.2px;top:394.2px;font-size:4.8px;color:#8a8078">人民日报客户端旅游频道、三农频道、</div>
<div class="t" style="left:651.2px;top:400.4px;font-size:4.8px;color:#8a8078">《国家人文历史》新媒体、《国家人文历</div>
<div class="t" style="left:651.2px;top:406.6px;font-size:4.8px;color:#8a8078">史》的网等媒体矩阵</div>
<div class="t" style="left:739.8px;top:420.2px;font-size:5.2px;font-weight:bold;color:#2a2522">独享人民日报商城发行渠道</div>
<div class="t" style="left:739.8px;top:427.7px;font-size:4.8px;color:#8a8078">全国主要机场、高端酒店、会所、党政</div>
<div class="t" style="left:739.8px;top:433.9px;font-size:4.8px;color:#8a8078">机关、协会、大型企事业单位等成功</div>
<div class="t" style="left:739.8px;top:440.1px;font-size:4.8px;color:#8a8078">人士聚集场所</div>
<div class="t" style="left:647px;top:447.7px;font-size:5.2px;font-weight:bold;color:#2a2522">共享人民日报新闻资源</div>
<div class="t" style="left:647px;top:455.2px;font-size:4.8px;color:#8a8078">共享人民日报旗下34家国内分社、45</div>
<div class="t" style="left:647px;top:461.4px;font-size:4.8px;color:#8a8078">家海外分社、20家子报子刊的相关新闻</div>
<div class="t" style="left:647px;top:467.6px;font-size:4.8px;color:#8a8078">资源</div>
<div class="t" style="left:743.8px;top:469.6px;font-size:5.2px;font-weight:bold;color:#2a2522">一流采编团队  丰富专家资源</div>
<div class="t" style="left:743.8px;top:477.1px;font-size:4.8px;color:#8a8078">拥有海量史料、细节丰厚的真实高点</div>
<div class="t" style="left:743.8px;top:483.3px;font-size:4.8px;color:#8a8078">更具阅读价值；</div>
<svg class="a" style="left:640px;top:505px" width="185" height="45" viewBox="0 0 185 45"><g fill="none" stroke="#f0e9df" stroke-width="1"><path d="M55 12h75l5 10h45v20H5V22h45z"/></g></svg>
<svg class="a" style="left:697px;top:521px" width="9" height="20" viewBox="0 0 9 22"><path d="M7 1Q0 11 7 21" fill="none" stroke="#dccb9c" stroke-width="1.2"/><path d="M5 4l-3-1M3.5 8l-3-1M3 12l-3 0M3.5 16l-3 1" stroke="#dccb9c" stroke-width="1.5"/></svg>
<svg class="a" style="left:755px;top:521px" width="9" height="20" viewBox="0 0 9 22"><path d="M2 1Q9 11 2 21" fill="none" stroke="#dccb9c" stroke-width="1.2"/><path d="M4 4l3-1M5.5 8l3-1M6 12l3 0M5.5 16l3 1" stroke="#dccb9c" stroke-width="1.5"/></svg>
<div class="t" style="left:708.7px;top:524.4px;font-size:7.3px;color:#d6c597;font-weight:bold">六大核心价值</div>
<div class="t" style="left:705.5px;top:532.7px;font-size:7.2px;color:#d6c597;font-weight:bold">缔造第一影响力</div>
<!-- /CONTENT -->
<!-- RIBBON -->
<svg class="a" style="left:14px;top:125px" width="24" height="26" viewBox="0 0 24 26"><path d="M4 3h3.5V1h5v2H16v5" fill="none" stroke="#c4c4c4" stroke-width="1.3"/><path d="M1 3h3v20H8M1 3v20" fill="none" stroke="#c4c4c4" stroke-width="1.3"/><rect x="9" y="9" width="14" height="16" fill="#f7f7f7" stroke="#c4c4c4" stroke-width="1.3"/></svg>
<div class="t" style="left:14px;top:154.3px;font-size:10px;color:#b8b8b8;">粘贴</div>
<svg class="a" style="left:22px;top:169.5px" width="6" height="4" viewBox="0 0 6 4"><path d="M0.5 0.5L3 3 5.5 0.5" fill="none" stroke="#b8b8b8" stroke-width="1"/></svg>
<svg class="a" style="left:45px;top:126px" width="11" height="14" viewBox="0 0 11 14"><path d="M2 0.5L8 9M9 0.5L3 9" stroke="#444" stroke-width="1"/><circle cx="2.6" cy="11" r="2" fill="#3c8fd6"/><circle cx="8.4" cy="11" r="2" fill="#3c8fd6"/></svg>
<svg class="a" style="left:43px;top:145px" width="15" height="14" viewBox="0 0 15 14"><path d="M7 2.5V0.5H1v10h4" fill="none" stroke="#444" stroke-width="1.1"/><path d="M5 3h6l3 3v7.5H5z" fill="#fff" stroke="#444" stroke-width="1.1"/><rect x="7.5" y="8" width="4" height="3" fill="#888"/></svg>
<svg class="a" style="left:62px;top:150.8px" width="6" height="4" viewBox="0 0 6 4"><path d="M0.5 0.5L3 3 5.5 0.5" fill="none" stroke="#555" stroke-width="1"/></svg>
<svg class="a" style="left:44px;top:165px" width="14" height="13" viewBox="0 0 14 13"><path d="M8 5l5-4.5" stroke="#444" stroke-width="1.6"/><path d="M1 7.5l5.5-3.5 3 3.5L6 12.5z" fill="#e8842c"/><path d="M3 9.5l3 1.5" stroke="#fff" stroke-width="0.8"/></svg>
<div class="t" style="left:18px;top:188.0px;font-size:10px;color:#444;">剪贴板</div>
<svg class="a" style="left:70px;top:190px" width="7" height="7" viewBox="0 0 7 7"><path d="M0.5 6.5V0.5h6v6z" fill="none" stroke="#999" stroke-width="0.8"/><path d="M2 2l4 4M6 3.5V6H3.5" fill="none" stroke="#777" stroke-width="0.9"/></svg>
<div class="a" style="left:79px;top:122px;width:1px;height:75px;background:#d6d4d6"></div>
<svg class="a" style="left:94px;top:123px" width="27" height="24" viewBox="0 0 27 24"><rect x="3" y="4" width="22.5" height="18" fill="#f8f8f8" stroke="#8a8a8a" stroke-width="1.8"/><path d="M3 9h22.5M13 9v13" stroke="#8a8a8a" stroke-width="1.6"/><path d="M0.5 5.5h9M5 1v9" stroke="#3aa35a" stroke-width="1.6"/></svg>
<div class="t" style="left:98.5px;top:154.3px;font-size:10px;color:#444;">新建</div>
<div class="t" style="left:88.5px;top:167.2px;font-size:10px;color:#444;">幻灯片</div>
<svg class="a" style="left:121.5px;top:170.2px" width="6" height="4" viewBox="0 0 6 4"><path d="M0.5 0.5L3 3 5.5 0.5" fill="none" stroke="#555" stroke-width="1"/></svg>
<div class="t" style="left:119px;top:188.0px;font-size:10px;color:#444;">幻灯片</div>
<svg class="a" style="left:133px;top:126px" width="13" height="11" viewBox="0 0 13 11"><rect x="0.8" y="0.8" width="11.4" height="9.4" fill="#fff" stroke="#555" stroke-width="1.3"/><path d="M2.5 3.5h8M6.5 3.5v5" stroke="#888" stroke-width="1"/></svg>
<div class="t" style="left:148.5px;top:127.2px;font-size:10px;color:#444;">版式</div>
<svg class="a" style="left:171.3px;top:130.5px" width="6" height="4" viewBox="0 0 6 4"><path d="M0.5 0.5L3 3 5.5 0.5" fill="none" stroke="#555" stroke-width="1"/></svg>
<svg class="a" style="left:133px;top:145px" width="13" height="12" viewBox="0 0 13 12"><rect x="0.8" y="2.2" width="11.4" height="9" fill="#fff" stroke="#666" stroke-width="1.2"/><path d="M3 5.5V2.5h3M4.5 1l-1.5 1.5 1.5 1.5" fill="none" stroke="#2e8ad8" stroke-width="1.1"/><rect x="2.5" y="7" width="8" height="2.5" fill="#ccc"/></svg>
<div class="t" style="left:148.5px;top:147.5px;font-size:10px;color:#444;">重置</div>
<svg class="a" style="left:133px;top:165px" width="13" height="14" viewBox="0 0 13 14"><rect x="0.8" y="2.5" width="11.4" height="10.7" fill="#fff" stroke="#666" stroke-width="1.3"/><path d="M0 1h13" stroke="#3aa35a" stroke-width="1.8"/><path d="M1 4.5h11" stroke="#888" stroke-width="1"/></svg>
<div class="t" style="left:148.5px;top:167.8px;font-size:10px;color:#444;">节</div>
<svg class="a" style="left:161.5px;top:171px" width="6" height="4" viewBox="0 0 6 4"><path d="M0.5 0.5L3 3 5.5 0.5" fill="none" stroke="#555" stroke-width="1"/></svg>
<div class="a" style="left:189px;top:122px;width:1px;height:75px;background:#d6d4d6"></div>
<div class="a" style="left:197px;top:129px;width:120px;height:19px;background:#e2e1e3;border:1px solid #dedde0"></div>
<svg class="a" style="left:308.5px;top:136.5px" width="6" height="4" viewBox="0 0 6 4"><path d="M0.5 0.5L3 3 5.5 0.5" fill="none" stroke="#b0b0b0" stroke-width="1"/></svg>
<div class="a" style="left:318px;top:129px;width:41px;height:19px;background:#e2e1e3;border:1px solid #dedde0"></div>
<svg class="a" style="left:350.5px;top:136.5px" width="6" height="4" viewBox="0 0 6 4"><path d="M0.5 0.5L3 3 5.5 0.5" fill="none" stroke="#b0b0b0" stroke-width="1"/></svg>
<div class="t" style="left:363px;top:130.5px;font-size:14px;color:#a8a8a8;font-weight:normal">A</div>
<svg class="a" style="left:372px;top:130px" width="5" height="4" viewBox="0 0 5 4"><path d="M0.5 3.5L2.5 1 4.5 3.5" fill="none" stroke="#aaa" stroke-width="0.8"/></svg>
<div class="t" style="left:383px;top:132.5px;font-size:12px;color:#a8a8a8;">A</div>
<svg class="a" style="left:390px;top:131px" width="5" height="4" viewBox="0 0 5 4"><path d="M0.5 0.5L2.5 3 4.5 0.5" fill="none" stroke="#aaa" stroke-width="0.8"/></svg>
<div class="a" style="left:399px;top:130px;width:1px;height:18px;background:#dddcde"></div>
<div class="t" style="left:404px;top:130.5px;font-size:14px;color:#a8a8a8;">A</div>
<svg class="a" style="left:410px;top:137px" width="8" height="7" viewBox="0 0 8 7"><path d="M1 4.5L4.5 1 7.5 4 4 7.5z" fill="#eee" stroke="#aaa" stroke-width="0.9"/></svg>
<div class="t" style="left:202.5px;top:159.5px;font-size:11px;color:#a8a8a8;font-weight:bold">B</div>
<div class="t" style="left:223.5px;top:159.5px;font-size:11px;color:#a8a8a8;font-style:italic">I</div>
<div class="t" style="left:242px;top:159.5px;font-size:11px;color:#a8a8a8;text-decoration:underline">U</div>
<div class="t" style="left:261px;top:159.5px;font-size:11px;color:#a8a8a8;">S</div>
<div class="t" style="left:276px;top:160.8px;font-size:10.5px;color:#a8a8a8;text-decoration:line-through">ab</div>
<div class="t" style="left:295px;top:158.5px;font-size:10px;color:#a8a8a8;">AV</div>
<svg class="a" style="left:294px;top:169px" width="15" height="5" viewBox="0 0 15 5"><path d="M1 2.5h13M3 0.5l-2 2 2 2M12 0.5l2 2-2 2" fill="none" stroke="#aaa" stroke-width="0.8"/></svg>
<svg class="a" style="left:311px;top:164px" width="6" height="4" viewBox="0 0 6 4"><path d="M0.5 0.5L3 3 5.5 0.5" fill="none" stroke="#aaa" stroke-width="1"/></svg>
<div class="t" style="left:325.5px;top:160.8px;font-size:11px;color:#a8a8a8;">Aa</div>
<svg class="a" style="left:341px;top:164.5px" width="6" height="4" viewBox="0 0 6 4"><path d="M0.5 0.5L3 3 5.5 0.5" fill="none" stroke="#aaa" stroke-width="1"/></svg>
<div class="a" style="left:354px;top:158px;width:1px;height:16px;background:#dddcde"></div>
<svg class="a" style="left:359px;top:159px" width="14" height="14" viewBox="0 0 14 14"><path d="M3 9l6-7.5 2 1.5-6 7z" fill="none" stroke="#aaa" stroke-width="1"/><path d="M2 10.5l1-1.5 2 1.3z" fill="#aaa"/><rect x="0" y="11.5" width="14" height="2.5" fill="#b0b0b0"/></svg>
<svg class="a" style="left:378px;top:164px" width="6" height="4" viewBox="0 0 6 4"><path d="M0.5 0.5L3 3 5.5 0.5" fill="none" stroke="#aaa" stroke-width="1"/></svg>
<div class="t" style="left:392.5px;top:158.5px;font-size:12px;color:#a8a8a8;">A</div>
<div class="a" style="left:391px;top:171px;width:14px;height:2.5px;background:#b0b0b0"></div>
<svg class="a" style="left:410px;top:164px" width="6" height="4" viewBox="0 0 6 4"><path d="M0.5 0.5L3 3 5.5 0.5" fill="none" stroke="#aaa" stroke-width="1"/></svg>
<div class="t" style="left:290.5px;top:187.5px;font-size:10px;color:#444;">字体</div>
<svg class="a" style="left:416px;top:190px" width="7" height="7" viewBox="0 0 7 7"><path d="M0.5 6.5V0.5h6v6z" fill="none" stroke="#999" stroke-width="0.8"/><path d="M2 2l4 4M6 3.5V6H3.5" fill="none" stroke="#777" stroke-width="0.9"/></svg>
<div class="a" style="left:426px;top:122px;width:1px;height:75px;background:#d6d4d6"></div>
<div class="a" style="left:435px;top:132px;width:2px;height:2px;background:#aaa"></div>
<div class="a" style="left:435px;top:137px;width:2px;height:2px;background:#aaa"></div>
<div class="a" style="left:435px;top:142px;width:2px;height:2px;background:#aaa"></div>
<div class="a" style="left:439px;top:132.5px;width:10px;height:1.2px;background:#aaa"></div>
<div class="a" style="left:439px;top:137.5px;width:10px;height:1.2px;background:#aaa"></div>
<div class="a" style="left:439px;top:142.5px;width:10px;height:1.2px;background:#aaa"></div>
<svg class="a" style="left:454px;top:137px" width="6" height="4" viewBox="0 0 6 4"><path d="M0.5 0.5L3 3 5.5 0.5" fill="none" stroke="#aaa" stroke-width="1"/></svg>
<div class="t" style="left:467px;top:131.5px;font-size:4px;color:#aaa;">1</div>
<div class="t" style="left:467px;top:136.5px;font-size:4px;color:#aaa;">2</div>
<div class="t" style="left:467px;top:141.5px;font-size:4px;color:#aaa;">3</div>
<div class="a" style="left:471px;top:132.5px;width:10px;height:1.2px;background:#aaa"></div>
<div class="a" style="left:471px;top:137.5px;width:10px;height:1.2px;background:#aaa"></div>
<div class="a" style="left:471px;top:142.5px;width:10px;height:1.2px;background:#aaa"></div>
<svg class="a" style="left:486px;top:137px" width="6" height="4" viewBox="0 0 6 4"><path d="M0.5 0.5L3 3 5.5 0.5" fill="none" stroke="#aaa" stroke-width="1"/></svg>
<div class="a" style="left:501px;top:132.5px;width:12px;height:1.2px;background:#aaa"></div>
<div class="a" style="left:507px;top:137.5px;width:6px;height:1.2px;background:#aaa"></div>
<div class="a" style="left:501px;top:142.5px;width:12px;height:1.2px;background:#aaa"></div>
<svg class="a" style="left:501px;top:135px" width="6" height="5" viewBox="0 0 6 5"><path d="M6 2.5H1M3 0.5l-2 2 2 2" fill="none" stroke="#aaa" stroke-width="0.8"/></svg>
<div class="a" style="left:520px;top:132.5px;width:12px;height:1.2px;background:#aaa"></div>
<div class="a" style="left:526px;top:137.5px;width:6px;height:1.2px;background:#aaa"></div>
<div class="a" style="left:520px;top:142.5px;width:12px;height:1.2px;background:#aaa"></div>
<svg class="a" style="left:520px;top:135px" width="6" height="5" viewBox="0 0 6 5"><path d="M0 2.5h5M3 0.5l2 2-2 2" fill="none" stroke="#aaa" stroke-width="0.8"/></svg>
<svg class="a" style="left:539px;top:131px" width="4" height="13" viewBox="0 0 4 13"><path d="M2 1v11M0.5 2.5L2 1l1.5 1.5M0.5 10.5L2 12l1.5-1.5" fill="none" stroke="#aaa" stroke-width="0.8"/></svg>
<div class="a" style="left:544px;top:132.5px;width:9px;height:1.2px;background:#aaa"></div>
<div class="a" style="left:544px;top:136.2px;width:9px;height:1.2px;background:#aaa"></div>
<div class="a" style="left:544px;top:139.9px;width:9px;height:1.2px;background:#aaa"></div>
<div class="a" style="left:544px;top:143.6px;width:9px;height:1.2px;background:#aaa"></div>
<svg class="a" style="left:556px;top:137px" width="6" height="4" viewBox="0 0 6 4"><path d="M0.5 0.5L3 3 5.5 0.5" fill="none" stroke="#aaa" stroke-width="1"/></svg>
<svg class="a" style="left:569px;top:124px" width="13" height="15" viewBox="0 0 13 15"><path d="M2 0.5v13M0.5 12l1.5 2 1.5-2M9 8v6M7.5 12l1.5 2 1.5-2" fill="none" stroke="#999" stroke-width="1"/><text x="5" y="7" font-size="7" fill="#999" font-family="Liberation Sans">A</text></svg>
<svg class="a" style="left:584px;top:130px" width="6" height="4" viewBox="0 0 6 4"><path d="M0.5 0.5L3 3 5.5 0.5" fill="none" stroke="#aaa" stroke-width="1"/></svg>
<svg class="a" style="left:567px;top:146px" width="15" height="12" viewBox="0 0 15 12"><rect x="0.6" y="1.5" width="13.8" height="9" fill="none" stroke="#aaa" stroke-width="0.9"/><path d="M7.5 0v12M6 1.5L7.5 0 9 1.5M6 10.5L7.5 12 9 10.5M3 6h9" fill="none" stroke="#aaa" stroke-width="0.8"/></svg>
<svg class="a" style="left:584px;top:150px" width="6" height="4" viewBox="0 0 6 4"><path d="M0.5 0.5L3 3 5.5 0.5" fill="none" stroke="#aaa" stroke-width="1"/></svg>
<svg class="a" style="left:568px;top:166px" width="14" height="12" viewBox="0 0 14 12"><path d="M0.5 0.5h6l3 4H3.5z" fill="#999"/><rect x="4.5" y="4.5" width="9" height="7" fill="#eee" stroke="#999" stroke-width="0.9"/><rect x="7" y="7" width="4" height="2" fill="#aaa"/></svg>
<svg class="a" style="left:584px;top:171px" width="6" height="4" viewBox="0 0 6 4"><path d="M0.5 0.5L3 3 5.5 0.5" fill="none" stroke="#aaa" stroke-width="1"/></svg>
<div class="a" style="left:436px;top:159.5px;width:12px;height:1.2px;background:#aaa"></div>
<div class="a" style="left:436px;top:163.2px;width:9px;height:1.2px;background:#aaa"></div>
<div class="a" style="left:436px;top:166.9px;width:12px;height:1.2px;background:#aaa"></div>
<div class="a" style="left:436px;top:170.6px;width:8px;height:1.2px;background:#aaa"></div>
<div class="a" style="left:455px;top:159.5px;width:12px;height:1.2px;background:#aaa"></div>
<div class="a" style="left:457px;top:163.2px;width:8px;height:1.2px;background:#aaa"></div>
<div class="a" style="left:455px;top:166.9px;width:12px;height:1.2px;background:#aaa"></div>
<div class="a" style="left:457px;top:170.6px;width:8px;height:1.2px;background:#aaa"></div>
<div class="a" style="left:474px;top:159.5px;width:12px;height:1.2px;background:#aaa"></div>
<div class="a" style="left:477px;top:163.2px;width:9px;height:1.2px;background:#aaa"></div>
<div class="a" style="left:474px;top:166.9px;width:12px;height:1.2px;background:#aaa"></div>
<div class="a" style="left:478px;top:170.6px;width:8px;height:1.2px;background:#aaa"></div>
<div class="a" style="left:493px;top:159.5px;width:12px;height:1.2px;background:#aaa"></div>
<div class="a" style="left:493px;top:163.2px;width:12px;height:1.2px;background:#aaa"></div>
<div class="a" style="left:493px;top:166.9px;width:12px;height:1.2px;background:#aaa"></div>
<div class="a" style="left:493px;top:170.6px;width:12px;height:1.2px;background:#aaa"></div>
<div class="a" style="left:512px;top:158px;width:1px;height:13px;background:#aaa"></div><div class="a" style="left:525px;top:158px;width:1px;height:13px;background:#aaa"></div>
<div class="a" style="left:514px;top:163.0px;width:10px;height:1.2px;background:#aaa"></div>
<div class="a" style="left:514px;top:166.5px;width:10px;height:1.2px;background:#aaa"></div>
<div class="a" style="left:514px;top:170.0px;width:10px;height:1.2px;background:#aaa"></div>
<svg class="a" style="left:514px;top:158px" width="10" height="4" viewBox="0 0 10 4"><path d="M0.5 2h9M2 0.5L0.5 2 2 3.5M8 0.5L9.5 2 8 3.5" fill="none" stroke="#aaa" stroke-width="0.7"/></svg>
<div class="a" style="left:530px;top:158px;width:1px;height:16px;background:#dddcde"></div>
<div class="a" style="left:536px;top:162.0px;width:5px;height:1.2px;background:#aaa"></div>
<div class="a" style="left:536px;top:165.5px;width:5px;height:1.2px;background:#aaa"></div>
<div class="a" style="left:536px;top:169.0px;width:5px;height:1.2px;background:#aaa"></div>
<div class="a" style="left:543px;top:162.0px;width:5px;height:1.2px;background:#aaa"></div>
<div class="a" style="left:543px;top:165.5px;width:5px;height:1.2px;background:#aaa"></div>
<div class="a" style="left:543px;top:169.0px;width:5px;height:1.2px;background:#aaa"></div>
<svg class="a" style="left:551px;top:164px" width="6" height="4" viewBox="0 0 6 4"><path d="M0.5 0.5L3 3 5.5 0.5" fill="none" stroke="#aaa" stroke-width="1"/></svg>
<div class="t" style="left:497px;top:188.0px;font-size:10px;color:#444;">段落</div>
<svg class="a" style="left:592px;top:190px" width="7" height="7" viewBox="0 0 7 7"><path d="M0.5 6.5V0.5h6v6z" fill="none" stroke="#999" stroke-width="0.8"/><path d="M2 2l4 4M6 3.5V6H3.5" fill="none" stroke="#777" stroke-width="0.9"/></svg>
<div class="a" style="left:602px;top:122px;width:1px;height:75px;background:#d6d4d6"></div>
<svg class="a" style="left:613px;top:124px" width="26" height="27" viewBox="0 0 26 27"><rect x="1" y="1" width="16.5" height="16.5" fill="#5aa9ea" stroke="#3584cc" stroke-width="1"/><circle cx="16.5" cy="16.5" r="8.5" fill="#f4f6f8" stroke="#555" stroke-width="1.3"/></svg>
<div class="t" style="left:616px;top:153.6px;font-size:10px;color:#444;">形状</div>
<svg class="a" style="left:623.5px;top:169.3px" width="6" height="4" viewBox="0 0 6 4"><path d="M0.5 0.5L3 3 5.5 0.5" fill="none" stroke="#444" stroke-width="1"/></svg>
<svg class="a" style="left:648px;top:124px" width="26" height="26" viewBox="0 0 26 26"><rect x="5" y="5" width="14" height="14" fill="#f7c96b" stroke="#c8912c" stroke-width="1"/><rect x="1" y="1" width="9" height="9" fill="#fff" stroke="#444" stroke-width="1.2"/><rect x="14.5" y="14.5" width="9.5" height="9.5" fill="#fff" stroke="#444" stroke-width="1.2"/></svg>
<div class="t" style="left:650.5px;top:153.6px;font-size:10px;color:#444;">排列</div>
<svg class="a" style="left:658.5px;top:169.3px" width="6" height="4" viewBox="0 0 6 4"><path d="M0.5 0.5L3 3 5.5 0.5" fill="none" stroke="#444" stroke-width="1"/></svg>
<svg class="a" style="left:687px;top:124px" width="28" height="26" viewBox="0 0 28 26"><rect x="1" y="1" width="22" height="23" rx="1.5" fill="#f4f3f4" stroke="#c8c8c8" stroke-width="1.2"/><path d="M26 6L16 17" stroke="#bbb" stroke-width="1.5"/><path d="M11 20q2-5 6-3q0 5-7 5z" fill="#bbb"/></svg>
<div class="t" style="left:680.5px;top:153.6px;font-size:10px;color:#b8b8b8;">快速样式</div>
<svg class="a" style="left:698px;top:169.3px" width="6" height="4" viewBox="0 0 6 4"><path d="M0.5 0.5L3 3 5.5 0.5" fill="none" stroke="#bbb" stroke-width="1"/></svg>
<svg class="a" style="left:725px;top:123px" width="14" height="14" viewBox="0 0 14 14"><path d="M3 6l4-4.5 4 4.5-4 4z" fill="none" stroke="#aaa" stroke-width="1"/><path d="M7 0v4" stroke="#aaa"/><rect x="0" y="11" width="13.5" height="2.5" fill="#aaa"/></svg>
<div class="t" style="left:741px;top:125.4px;font-size:10px;color:#b8b8b8;">形状填充</div>
<svg class="a" style="left:784px;top:128.5px" width="6" height="4" viewBox="0 0 6 4"><path d="M0.5 0.5L3 3 5.5 0.5" fill="none" stroke="#bbb" stroke-width="1"/></svg>
<svg class="a" style="left:725px;top:143px" width="14" height="14" viewBox="0 0 14 14"><path d="M1 10V1h9" fill="none" stroke="#aaa" stroke-width="1"/><path d="M4 8.5L11 1.5l1.5 1.5L5.5 10H4z" fill="none" stroke="#aaa" stroke-width="1"/><rect x="0" y="11" width="13.5" height="2.5" fill="#aaa"/></svg>
<div class="t" style="left:741px;top:144.5px;font-size:10px;color:#b8b8b8;">形状轮廓</div>
<svg class="a" style="left:784px;top:147.5px" width="6" height="4" viewBox="0 0 6 4"><path d="M0.5 0.5L3 3 5.5 0.5" fill="none" stroke="#bbb" stroke-width="1"/></svg>
<svg class="a" style="left:725px;top:162px" width="14" height="12" viewBox="0 0 14 12"><path d="M1 7l5-6h7L8 7z" fill="#eee" stroke="#aaa" stroke-width="1"/><path d="M1 7v4h7V7M8 11l5-5V1" fill="#ccc" stroke="#aaa" stroke-width="1"/></svg>
<div class="t" style="left:741px;top:163.5px;font-size:10px;color:#b8b8b8;">形状效果</div>
<svg class="a" style="left:784px;top:166.5px" width="6" height="4" viewBox="0 0 6 4"><path d="M0.5 0.5L3 3 5.5 0.5" fill="none" stroke="#bbb" stroke-width="1"/></svg>
<div class="t" style="left:684.5px;top:188.4px;font-size:10px;color:#444;">绘图</div>
<svg class="a" style="left:792px;top:190px" width="7" height="7" viewBox="0 0 7 7"><path d="M0.5 6.5V0.5h6v6z" fill="none" stroke="#999" stroke-width="0.8"/><path d="M2 2l4 4M6 3.5V6H3.5" fill="none" stroke="#777" stroke-width="0.9"/></svg>
<div class="a" style="left:802px;top:122px;width:1px;height:75px;background:#d6d4d6"></div>
<svg class="a" style="left:812px;top:124px" width="14" height="13" viewBox="0 0 14 13"><circle cx="8.5" cy="5" r="4.2" fill="none" stroke="#444" stroke-width="1.1"/><path d="M5.5 8L1 12.5" stroke="#444" stroke-width="1.3"/></svg>
<div class="t" style="left:827.5px;top:125.6px;font-size:10px;color:#444;">查找</div>
<svg class="a" style="left:811px;top:143px" width="13" height="13" viewBox="0 0 13 13"><text x="5.5" y="5" font-size="6" fill="#8e5fc2" font-family="Liberation Sans">b</text><text x="8" y="12.5" font-size="6" fill="#2e8ad8" font-family="Liberation Sans">c</text><path d="M3 3Q0 6 2.5 9.5L5 11M4 8.5L5 11 2.5 11.5" fill="none" stroke="#2e8ad8" stroke-width="1"/></svg>
<div class="t" style="left:827.5px;top:145.3px;font-size:10px;color:#444;">替换</div>
<svg class="a" style="left:855.5px;top:148.5px" width="6" height="4" viewBox="0 0 6 4"><path d="M0.5 0.5L3 3 5.5 0.5" fill="none" stroke="#555" stroke-width="1"/></svg>
<svg class="a" style="left:813px;top:162px" width="10" height="13" viewBox="0 0 10 13"><path d="M1 1v10l2.5-2.5L6 12l1.5-0.8-2.3-3.5H9z" fill="#fff" stroke="#444" stroke-width="1"/></svg>
<div class="t" style="left:827.5px;top:163.5px;font-size:10px;color:#444;">选择</div>
<svg class="a" style="left:850.5px;top:166.5px" width="6" height="4" viewBox="0 0 6 4"><path d="M0.5 0.5L3 3 5.5 0.5" fill="none" stroke="#555" stroke-width="1"/></svg>
<div class="t" style="left:827px;top:188.0px;font-size:10px;color:#444;">编组</div>
<div class="a" style="left:872px;top:122px;width:1px;height:75px;background:#d6d4d6"></div>
<svg class="a" style="left:883px;top:123px" width="27" height="24" viewBox="0 0 27 24"><rect x="4" y="5" width="21" height="18" fill="#fafafa" stroke="#777" stroke-width="1.8"/><path d="M4 9h21M17 9v14" stroke="#777" stroke-width="1.2"/><path d="M6 0L1 8h3.5L2 15 9.5 5.5H6L8.5 0z" fill="#f2a623" stroke="#d9861a" stroke-width="0.5"/></svg>
<div class="t" style="left:887.5px;top:154.3px;font-size:10px;color:#444;">设计</div>
<div class="t" style="left:887.5px;top:166.6px;font-size:10px;color:#444;">灵感</div>
<div class="t" style="left:881.5px;top:188.0px;font-size:10px;color:#444;">设计器</div>
<div class="a" style="left:920px;top:122px;width:1px;height:75px;background:#d6d4d6"></div>
<svg class="a" style="left:938px;top:127px" width="24" height="18" viewBox="0 0 24 18"><circle cx="6" cy="11.5" r="4.5" fill="none" stroke="#2fa5e8" stroke-width="2.6"/><circle cx="17.5" cy="11.5" r="4.5" fill="none" stroke="#2fa5e8" stroke-width="2.6"/><circle cx="11.8" cy="5.5" r="4.2" fill="none" stroke="#e2486a" stroke-width="2.6"/><path d="M8.5 9.5A4.2 4.2 0 0 0 15 9.5" fill="none" stroke="#2fa5e8" stroke-width="2.6"/></svg>
<div class="t" style="left:935px;top:154.3px;font-size:10px;color:#444;">保存到</div>
<div class="t" style="left:930px;top:166.6px;font-size:10px;color:#444;">百度网盘</div>
<div class="t" style="left:939.5px;top:188.0px;font-size:10px;color:#444;">保存</div>
<div class="a" style="left:978px;top:122px;width:1px;height:75px;background:#d6d4d6"></div>
<svg class="a" style="left:1062px;top:193px" width="9" height="5" viewBox="0 0 9 5"><path d="M0.5 4.5L4.5 0.8 8.5 4.5" fill="none" stroke="#555" stroke-width="1.1"/></svg>
<!-- /RIBBON -->
<!-- bottom toolbar -->
<div class="a" style="left:0;top:637px;width:1268px;height:45px;background:#fafafa"></div>
<!-- PANEL -->
<div class="a" style="left:1079px;top:50px;width:189px;height:588px;background:linear-gradient(180deg,#0c0d0e 0px,#131415 45px,#2a2c2f 62px,#3a3d40 150px,#34373a 350px,#25272a 480px,#141516 588px)"></div>
<div class="a" style="left:1079px;top:110px;width:9px;height:528px;background:linear-gradient(90deg,#1e2022 0,#1e2022 2px,#4a4d51 2px,#4a4d51 100%)"></div>
<div class="a" style="left:1066px;top:336.5px;width:13px;height:32.5px;background:#5c5c5e;border-radius:3px 0 0 3px"></div>
<svg class="a" style="left:1069px;top:347px" width="8" height="11" viewBox="0 0 8 11"><path d="M1.5 1l5 4.5-5 4.5" fill="none" stroke="#cfcfcf" stroke-width="1.1"/></svg>
<svg class="a" style="left:1166px;top:53px" width="16" height="9" viewBox="0 0 16 9"><path d="M0 9h16L8 0z" fill="#9a9c9e"/></svg>
<div class="a" style="left:1086px;top:106px;width:176px;height:84px;border:1.5px solid #1faa59;border-radius:2px;overflow:hidden;background:linear-gradient(90deg,#d5cdca 0%,#ddd6d3 40%,#d8d0c8 70%,#cfc6bc 100%)"><div class="a" style="left:40px;top:8px;width:30px;height:4px;background:#e8e4e2"></div><div class="a" style="left:134px;top:10px;width:30px;height:75px;background:linear-gradient(90deg,#c8beb0,#e2dcd6 30%,#b8c8d8 60%,#d0d8e0)"></div><div class="a" style="left:140px;top:70px;width:30px;height:10px;background:linear-gradient(90deg,#5a80b0,#3a70a8,#a0b8d0)"></div><div class="a" style="left:0;top:0;width:176px;height:14px;background:linear-gradient(180deg,#e2dcda,#d8d0ce)"></div><div class="a" style="left:14px;top:8px;width:50px;height:4px;background:#ebe7e6"></div><div class="a" style="left:132px;top:20px;width:2px;height:64px;background:#bfb5aa"></div><div class="a" style="left:48px;top:66px;width:84px;height:22px;border-radius:45% 45% 0 0;background:#ebe7e9"></div><div class="a" style="left:62px;top:6px;width:46px;height:40px;border-radius:50% 50% 35% 35%;background:#4a3d37"></div><div class="a" style="left:64px;top:24px;width:44px;height:54px;border-radius:38% 38% 48% 48%;background:radial-gradient(ellipse at 50% 45%,#b8958c 0%,#a8857a 55%,#8e6c62 100%)"></div><div class="a" style="left:72px;top:42px;width:10px;height:3px;border-radius:50%;background:#7a5a52;opacity:.7"></div><div class="a" style="left:89px;top:42px;width:10px;height:3px;border-radius:50%;background:#7a5a52;opacity:.7"></div><div class="a" style="left:80px;top:62px;width:12px;height:2px;border-radius:50%;background:#8a5a52;opacity:.6"></div><div class="a" style="left:110px;top:61px;width:13px;height:12px;border-radius:50%;background:#d8383a"></div></div>
<div class="a" style="left:1088px;top:171px;width:17px;height:16px;background:#1677ff"></div><svg class="a" style="left:1091px;top:174px" width="11" height="11" viewBox="0 0 11 11"><circle cx="5.5" cy="3" r="2.6" fill="#fff"/><path d="M0.5 11q0-5 5-5t5 5z" fill="#fff"/></svg>
<div class="a" style="left:1105px;top:171px;width:41px;height:16.5px;background:rgba(40,40,42,.92)"></div>
<svg class="a" style="left:1109px;top:173px" width="12" height="13" viewBox="0 0 12 13"><rect x="3.8" y="0.5" width="4.4" height="7.5" rx="2.2" fill="#37d05a"/><path d="M1.5 6q0 4 4.5 4.3q4.5-.3 4.5-4.3M6 10.3V12.5" fill="none" stroke="#fff" stroke-width="1.3"/></svg>
<div class="t" style="left:1125px;top:174.5px;font-size:10px;color:#f0f0f0;">周斌</div>
<div class="a" style="left:1073px;top:81px;width:194px;height:29.5px;background:#3a3d42;border-radius:5px;box-shadow:0 1px 3px rgba(0,0,0,.3)"></div>
<svg class="a" style="left:1082px;top:89px" width="12" height="13" viewBox="0 0 12 13"><rect x="4" y="0.5" width="4.2" height="7" rx="2" fill="#8a8d90"/><path d="M2 6q0 4 4.1 4.1q4.1-.1 4.1-4.1M6.1 10.1V12.5M3.8 12.5h4.6" fill="none" stroke="#8a8d90" stroke-width="1"/><path d="M1 12.5L11.5 1.5" stroke="#d9432e" stroke-width="1.1"/></svg>
<div class="a" style="left:1101px;top:85px;width:1px;height:22px;background:#4c4f54"></div>
<div class="t" style="left:1109px;top:91.0px;font-size:10.5px;color:#e6e6e6;">正在讲话: 周斌</div>
<svg class="a" style="left:1194px;top:87px" width="36" height="19" viewBox="0 0 36 19"><path d="M0 9.5L9 0.5l9 9-9 9z" fill="#4a4d52"/><path d="M12 9.5L21 0.5l9 9-9 9z" fill="#55585d"/><path d="M22 6l5-5 9 8.5-9 9-5-5z" fill="#4a4d52"/></svg>
<div class="a" style="left:1241px;top:88px;width:1px;height:16px;background:#55585d"></div>
<svg class="a" style="left:1248px;top:90px" width="13" height="11" viewBox="0 0 13 11"><path d="M5 0.5L0.5 4.5 5 8.5V6q5 0 7.5 4.5Q12 3 5 3z" fill="#b8babd"/></svg>
<div class="a" style="left:1087px;top:196px;width:175px;height:99px;background:#212224;border:1px solid #3d4044;border-radius:3px"></div>
<div class="a" style="left:1150px;top:216px;width:48px;height:48px;border-radius:50%;overflow:hidden;background:#5a9a8a"><div class="a" style="left:4px;top:2px;width:40px;height:36px;border-radius:50%;background:#1d7ad0"></div><div class="a" style="left:9px;top:11px;width:30px;height:24px;border-radius:50%;background:#fff"></div><div class="a" style="left:20px;top:10px;width:8px;height:7px;border-radius:50%;background:#fff;border:1px solid #333"></div><div class="a" style="left:22px;top:16px;width:4px;height:4px;border-radius:50%;background:#e03020"></div><div class="a" style="left:10px;top:34px;width:30px;height:14px;background:#1d7ad0"></div><div class="a" style="left:24px;top:33px;width:14px;height:12px;background:#e85a28;transform:rotate(-10deg)"></div></div>
<div class="a" style="left:1088px;top:277px;width:96px;height:16.5px;background:rgba(12,12,13,.85)"></div>
<svg class="a" style="left:1092px;top:279px" width="12" height="13" viewBox="0 0 12 13"><rect x="4" y="0.5" width="4.5" height="7.5" rx="2.2" fill="#e8e8e8"/><path d="M2 6q0 4 4.2 4.2q4.2-.2 4.2-4.2M6.2 10.2V12.5M3.8 12.5h5" fill="none" stroke="#e8e8e8" stroke-width="1.1"/><path d="M1 12L11 1.5" stroke="#e5362e" stroke-width="1.3"/></svg>
<div class="t" style="left:1108px;top:280.9px;font-size:9.2px;color:#eee;">37170233 张彦哲</div>
<div class="a" style="left:1087px;top:303px;width:175px;height:99px;background:#212224;border:1px solid #3d4044;border-radius:3px"></div>
<div class="a" style="left:1150px;top:323px;width:48px;height:48px;border-radius:50%;background:#fff"></div>
<div class="a" style="left:1165px;top:334px;width:17px;height:27px;border-radius:40% 40% 45% 45%;background:linear-gradient(180deg,#f0d870 0%,#f2c850 45%,#f08070 60%,#e86060 100%)"></div>
<div class="a" style="left:1170px;top:330px;width:6px;height:6px;border-radius:50%;background:#e04848"></div>
<div class="a" style="left:1088px;top:384px;width:17px;height:16px;background:#f2801f"></div><svg class="a" style="left:1091px;top:387px" width="11" height="11" viewBox="0 0 11 11"><circle cx="5.5" cy="3" r="2.6" fill="#fff"/><path d="M0.5 11q0-5 5-5t5 5z" fill="#fff"/></svg>
<div class="a" style="left:1105px;top:384px;width:51px;height:16.5px;background:rgba(12,12,13,.85)"></div>
<svg class="a" style="left:1109px;top:386px" width="12" height="13" viewBox="0 0 12 13"><rect x="4" y="0.5" width="4.5" height="7.5" rx="2.2" fill="#e8e8e8"/><path d="M2 6q0 4 4.2 4.2q4.2-.2 4.2-4.2M6.2 10.2V12.5M3.8 12.5h5" fill="none" stroke="#e8e8e8" stroke-width="1.1"/><path d="M1 12L11 1.5" stroke="#e5362e" stroke-width="1.3"/></svg>
<div class="t" style="left:1125px;top:387.9px;font-size:9.2px;color:#eee;">杨老师</div>
<div class="a" style="left:1087px;top:410px;width:175px;height:99px;background:#212224;border:1px solid #3d4044;border-radius:3px"></div>
<div class="a" style="left:1150px;top:430px;width:48px;height:48px;border-radius:50%;background:#fff"></div>
<div class="a" style="left:1163px;top:439px;width:20px;height:19px;border-radius:50%;background:#4e5256"></div>
<div class="a" style="left:1167px;top:446px;width:12px;height:8px;border-radius:50%;background:#fff"></div>
<div class="a" style="left:1171px;top:449px;width:4px;height:3px;border-radius:50%;background:#f0a030"></div>
<div class="a" style="left:1160px;top:456px;width:26px;height:14px;border-radius:40% 40% 30% 30%;background:#5a5e62"></div>
<div class="a" style="left:1188px;top:451px;width:4px;height:3px;border-radius:50%;background:#f07070"></div>
<div class="a" style="left:1088px;top:491px;width:17px;height:16px;background:#1677ff"></div><svg class="a" style="left:1091px;top:494px" width="11" height="11" viewBox="0 0 11 11"><circle cx="5.5" cy="3" r="2.6" fill="#fff"/><path d="M0.5 11q0-5 5-5t5 5z" fill="#fff"/></svg>
<div class="a" style="left:1105px;top:491px;width:91px;height:16.5px;background:rgba(12,12,13,.85)"></div>
<svg class="a" style="left:1109px;top:493px" width="12" height="13" viewBox="0 0 12 13"><rect x="4" y="0.5" width="4.5" height="7.5" rx="2.2" fill="#e8e8e8"/><path d="M2 6q0 4 4.2 4.2q4.2-.2 4.2-4.2M6.2 10.2V12.5M3.8 12.5h5" fill="none" stroke="#e8e8e8" stroke-width="1.1"/><path d="M1 12L11 1.5" stroke="#e5362e" stroke-width="1.3"/></svg>
<div class="t" style="left:1125px;top:494.9px;font-size:9.2px;color:#eee;">37170209袁佳伊</div>
<div class="a" style="left:1087px;top:516px;width:175px;height:98px;background:linear-gradient(180deg,#232426,#161719);border:1px solid #2c2e31;border-radius:3px"></div>
<div class="a" style="left:1150px;top:536px;width:48px;height:48px;border-radius:50%;overflow:hidden;background:linear-gradient(180deg,#7aa0c8 0%,#c8b898 22%,#a88860 42%,#6a8aa8 52%,#4a6a90 80%,#6a7a88 100%)"></div>
<div class="a" style="left:1088px;top:597px;width:82px;height:16.5px;background:rgba(12,12,13,.85)"></div>
<svg class="a" style="left:1092px;top:599px" width="12" height="13" viewBox="0 0 12 13"><rect x="4" y="0.5" width="4.5" height="7.5" rx="2.2" fill="#e8e8e8"/><path d="M2 6q0 4 4.2 4.2q4.2-.2 4.2-4.2M6.2 10.2V12.5M3.8 12.5h5" fill="none" stroke="#e8e8e8" stroke-width="1.1"/><path d="M1 12L11 1.5" stroke="#e5362e" stroke-width="1.3"/></svg>
<div class="t" style="left:1108px;top:600.9px;font-size:9.2px;color:#eee;">王锟02170324</div>
<svg class="a" style="left:1166px;top:625px" width="16" height="9" viewBox="0 0 16 9"><path d="M0 0h16L8 9z" fill="#fff"/></svg>
<svg class="a" style="left:298px;top:643px" width="16" height="17" viewBox="0 0 16 17"><rect x="5" y="0.5" width="6" height="10" rx="3" fill="#3d3d3d"/><path d="M2 8q0 5.5 6 5.8q6-.3 6-5.8M8 13.8V16.5M4.5 16.5h7" fill="none" stroke="#3d3d3d" stroke-width="1.5"/><path d="M1 15.5L15 1.5" stroke="#e5362e" stroke-width="1.6"/></svg>
<div class="t" style="left:246px;width:120px;text-align:center;top:665.1px;font-size:8.8px;color:#222">解除静音</div>
<svg class="a" style="left:330px;top:651px" width="8" height="5" viewBox="0 0 8 5"><path d="M0 5h8L4 0z" fill="#555"/></svg>
<svg class="a" style="left:352px;top:645px" width="20" height="14" viewBox="0 0 20 14"><rect x="0" y="1" width="13.5" height="12" rx="1" fill="#3d3d3d"/><path d="M14 5.5L20 2v10l-6-3.5z" fill="#3d3d3d"/><path d="M1 13.5L14.5 0.5" stroke="#e5362e" stroke-width="1.6"/></svg>
<div class="t" style="left:302px;width:120px;text-align:center;top:665.1px;font-size:8.8px;color:#222">开启视频</div>
<svg class="a" style="left:386px;top:651px" width="8" height="5" viewBox="0 0 8 5"><path d="M0 5h8L4 0z" fill="#555"/></svg>
<svg class="a" style="left:408px;top:644px" width="20" height="16" viewBox="0 0 20 16"><rect x="0" y="0" width="20" height="12.5" rx="1.5" fill="#3d3d3d"/><path d="M5 15.5h10" stroke="#3d3d3d" stroke-width="1.5"/><path d="M7 9.5q0-4 5-4V3.5l3.5 3-3.5 3V7.5q-3 0-5 2z" fill="#fff"/></svg>
<div class="t" style="left:358px;width:120px;text-align:center;top:665.1px;font-size:8.8px;color:#222">共享屏幕</div>
<svg class="a" style="left:442px;top:651px" width="8" height="5" viewBox="0 0 8 5"><path d="M0 5h8L4 0z" fill="#555"/></svg>
<svg class="a" style="left:470px;top:643px" width="20" height="17" viewBox="0 0 20 17"><circle cx="8" cy="4.5" r="4" fill="#3d3d3d"/><path d="M0 17q0-7.5 8-7.5q3 0 5 1v6.5z" fill="#3d3d3d"/><circle cx="14.5" cy="12" r="4.5" fill="#3d3d3d" stroke="#fafafa" stroke-width="1.2"/><path d="M14.5 9.5v5M12 12h5" stroke="#fff" stroke-width="1.2"/></svg>
<div class="t" style="left:420px;width:120px;text-align:center;top:665.1px;font-size:8.8px;color:#222">邀请</div>
<svg class="a" style="left:525px;top:643px" width="20" height="17" viewBox="0 0 20 17"><circle cx="9" cy="4.5" r="4.2" fill="#3d3d3d"/><path d="M0.5 17q0-7.5 8.5-7.5t8.5 7.5z" fill="#3d3d3d"/><path d="M13 1.5q3 1.5 2 5M16 10q3 2 3 7" fill="none" stroke="#3d3d3d" stroke-width="1.2"/></svg>
<div class="t" style="left:475px;width:120px;text-align:center;top:665.1px;font-size:8.8px;color:#222">成员(99+)</div>
<svg class="a" style="left:582px;top:644px" width="18" height="17" viewBox="0 0 18 17"><path d="M1 0h16a1 1 0 0 1 1 1v11a1 1 0 0 1-1 1H9l-4 4v-4H1a1 1 0 0 1-1-1V1a1 1 0 0 1 1-1z" fill="#3d3d3d"/><circle cx="5" cy="6.5" r="1.3" fill="#fff"/><circle cx="9" cy="6.5" r="1.3" fill="#fff"/><circle cx="13" cy="6.5" r="1.3" fill="#fff"/></svg>
<div class="t" style="left:531px;width:120px;text-align:center;top:665.1px;font-size:8.8px;color:#222">聊天</div>
<svg class="a" style="left:637px;top:643px" width="20" height="19" viewBox="0 0 20 19"><circle cx="10" cy="9.5" r="8.5" fill="none" stroke="#3d3d3d" stroke-width="1.5"/><circle cx="10" cy="9.5" r="6.3" fill="#3d3d3d"/></svg>
<div class="t" style="left:587px;width:120px;text-align:center;top:665.1px;font-size:8.8px;color:#222">录制</div>
<svg class="a" style="left:693px;top:643px" width="20" height="17" viewBox="0 0 20 17"><path d="M6 0.5l3 3M14 0.5l-3 3" stroke="#3d3d3d" stroke-width="1.3"/><rect x="0" y="3" width="20" height="14" rx="2" fill="#3d3d3d"/><path d="M7.5 6.5v7l6-3.5z" fill="#fff"/></svg>
<div class="t" style="left:643px;width:120px;text-align:center;top:665.1px;font-size:8.8px;color:#222">直播</div>
<svg class="a" style="left:750px;top:643px" width="19" height="19" viewBox="0 0 19 19"><circle cx="9.5" cy="9.5" r="9.2" fill="#3d3d3d"/><circle cx="6.3" cy="6.5" r="1.5" fill="#fff"/><circle cx="12.7" cy="6.5" r="1.5" fill="#fff"/><path d="M4 10h11q-1 5.5-5.5 5.5T4 10z" fill="#fff"/></svg>
<div class="t" style="left:699px;width:120px;text-align:center;top:665.1px;font-size:8.8px;color:#222">表情</div>
<svg class="a" style="left:808px;top:643px" width="15" height="19" viewBox="0 0 15 19"><path d="M0 1.5a1.5 1.5 0 0 1 1.5-1.5H10l5 5v12.5a1.5 1.5 0 0 1-1.5 1.5h-12A1.5 1.5 0 0 1 0 17.5z" fill="#3d3d3d"/><path d="M3.5 10h8M3.5 13.5h8" stroke="#fff" stroke-width="1.5"/></svg>
<div class="t" style="left:755px;width:120px;text-align:center;top:665.1px;font-size:8.8px;color:#222">文档(1)</div>
<svg class="a" style="left:862px;top:643px" width="19" height="19" viewBox="0 0 19 19"><path d="M9.5 0l2 2.6 3.2-.6.6 3.2 2.7 1.8-1.4 3 1.4 3-2.7 1.8-.6 3.2-3.2-.6-2 2.6-2-2.6-3.2.6-.6-3.2L.5 13l1.4-3-1.4-3 2.7-1.8.6-3.2 3.2.6z" fill="#3d3d3d"/><circle cx="9.5" cy="9.5" r="3" fill="#fafafa"/></svg>
<div class="t" style="left:812px;width:120px;text-align:center;top:665.1px;font-size:8.8px;color:#222">设置</div>
<div class="a" style="left:1179px;top:644px;width:62px;height:30px;border:1.5px solid #e86a6a;border-radius:4px;background:#fff"></div>
<div class="t" style="left:1190px;top:655px;font-size:11px;color:#e86a6a">离开会议</div>
<div class="a" style="left:1110px;top:656px;width:158px;height:24px;background:#f4f8fc;border:1px solid #c8d4e0;border-radius:2px"></div>
<div class="a" style="left:1114px;top:657px;width:26px;height:22px;background:linear-gradient(135deg,#ff7a30,#f24a18);border-radius:4px"></div>
<div class="t" style="left:1118px;top:658px;font-size:19px;font-weight:bold;color:#fff;font-style:italic">S</div>
<div class="a" style="left:1145px;top:659px;width:1px;height:18px;background:#f0b8a0"></div>
<div class="t" style="left:1151px;top:662px;font-size:12px;font-weight:bold;color:#1e6fd0">中</div>
<div class="t" style="left:1172px;top:660px;font-size:12px;font-weight:bold;color:#1e6fd0">°,</div>
<svg class="a" style="left:1191px;top:660px" width="15" height="15" viewBox="0 0 15 15"><circle cx="7.5" cy="7.5" r="6.5" fill="none" stroke="#1e6fd0" stroke-width="1.4"/><circle cx="5.2" cy="6" r="1" fill="#1e6fd0"/><circle cx="9.8" cy="6" r="1" fill="#1e6fd0"/><path d="M4.5 9q3 3 6 0" fill="none" stroke="#1e6fd0" stroke-width="1.2"/></svg>
<svg class="a" style="left:1212px;top:661px" width="14" height="14" viewBox="0 0 14 14"><path d="M1 13l0.8-3.5L10 1.3l2.7 2.7-8.2 8.2z" fill="none" stroke="#1e6fd0" stroke-width="1.5"/></svg>
<svg class="a" style="left:1232px;top:660px" width="11" height="16" viewBox="0 0 11 16"><rect x="3" y="0" width="5" height="10" rx="2.5" fill="#1e6fd0"/><path d="M1 7q0 4.5 4.5 4.5T10 7M5.5 11.5V15" fill="none" stroke="#1e6fd0" stroke-width="1.4"/></svg>
<svg class="a" style="left:1251px;top:661px" width="14" height="14" viewBox="0 0 14 14"><rect x="0" y="0" width="6" height="6" fill="#1e6fd0"/><rect x="8" y="0" width="6" height="6" fill="#1e6fd0"/><rect x="0" y="8" width="6" height="6" fill="#1e6fd0"/><rect x="8" y="8" width="6" height="6" fill="#1e6fd0"/></svg>
<div class="a" style="left:0;top:680px;width:1110px;height:2px;background:#2a2a2a"></div>
<!-- /PANEL -->
</body></html>
